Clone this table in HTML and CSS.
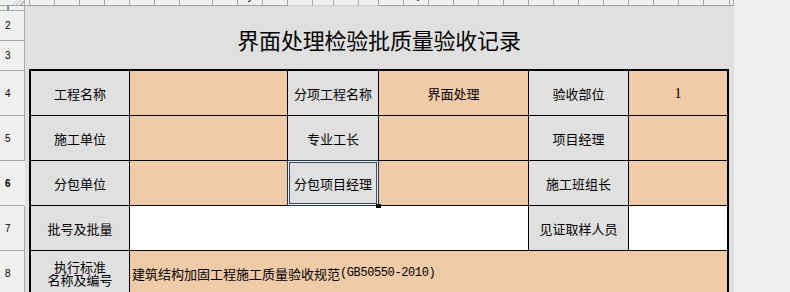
FILE: index.html
```html
<!DOCTYPE html>
<html lang="zh-CN">
<head>
<meta charset="utf-8">
<title>界面处理检验批质量验收记录</title>
<link rel="stylesheet" href="styles.css">
</head>
<body>
  <div class="colhead">
    <div class="ch corner"><i class="hatch"></i></div>
    <div class="ch"><span>A</span></div>
    <div class="ch"><span>B</span></div>
    <div class="ch"><span>C</span></div>
    <div class="ch"><span>D</span></div>
    <div class="ch"><span>E</span></div>
    <div class="ch"><span>F</span></div>
    <div class="ch"><span>G</span></div>
    <div class="ch"><span>H</span></div>
    <div class="ch"><span>I</span></div>
    <div class="ch"><span>J</span></div>
    <div class="ch"><span>K</span></div>
    <div class="ch on"><span>L</span></div>
    <div class="ch on"><span>M</span></div>
    <div class="ch on"><span>N</span></div>
    <div class="ch on"><span>O</span></div>
    <div class="ch"><span>P</span></div>
    <div class="ch"><span>Q</span></div>
    <div class="ch"><span>R</span></div>
    <div class="ch"><span>S</span></div>
    <div class="ch"><span>T</span></div>
    <div class="ch"><span>U</span></div>
    <div class="ch"><span>V</span></div>
    <div class="ch"><span>W</span></div>
    <div class="ch"><span>X</span></div>
    <div class="ch"><span>Y</span></div>
    <div class="ch"><span>Z</span></div>
    <div class="ch"><span>AA</span></div>
    <div class="ch"><span>AB</span></div>
    <div class="ch"><span>AC</span></div>
    <div class="ch"><span>AD</span></div>
  </div>

  <div class="body-row">
    <div class="rowhead">
      <div class="rh r-tiny">1</div>
      <div class="rh r-title">2</div>
      <div class="rh r-title">3</div>
      <div class="rh r-form">4</div>
      <div class="rh r-form">5</div>
      <div class="rh r-form on">6</div>
      <div class="rh r-form">7</div>
      <div class="rh r-form">8</div>
    </div>

    <main class="sheet">
      <h1 class="title">界面处理检验批质量验收记录</h1>
      <div class="form">
        <div class="c lbl">工程名称</div>
        <div class="c val"></div>
        <div class="c lbl">分项工程名称</div>
        <div class="c val">界面处理</div>
        <div class="c lbl">验收部位</div>
        <div class="c val num">1</div>

        <div class="c lbl">施工单位</div>
        <div class="c val"></div>
        <div class="c lbl">专业工长</div>
        <div class="c val"></div>
        <div class="c lbl">项目经理</div>
        <div class="c val"></div>

        <div class="c lbl">分包单位</div>
        <div class="c val"></div>
        <div class="c lbl active">分包项目经理<i class="handle"></i></div>
        <div class="c val"></div>
        <div class="c lbl">施工班组长</div>
        <div class="c val"></div>

        <div class="c lbl">批号及批量</div>
        <div class="c blank span3"></div>
        <div class="c lbl">见证取样人员</div>
        <div class="c blank"></div>

        <div class="c lbl two"><span>执行标准</span><span>名称及编号</span></div>
        <div class="c val span5 left">建筑结构加固工程施工质量验收规范<span class="code">(GB50550-2010)</span></div>
      </div>
    </main>
  </div>
</body>
</html>
```

FILE: styles.css
```css
html, body {
  margin: 0;
  padding: 0;
}

body {
  width: 790px;
  height: 292px;
  overflow: hidden;
  background: #efefef;
  font-family: "Noto Sans CJK SC", sans-serif;
  color: #000;
}

/* ---- column header strip ---- */
.colhead {
  display: grid;
  grid-template-columns: 25px 5px repeat(6, 25px) 33px repeat(4, 25px) 21px 25px 20px repeat(13, 25px) 26px 4px;
  width: 734px;
  height: 6px;
}

.ch {
  position: relative;
  box-sizing: border-box;
  height: 6px;
  overflow: hidden;
  background: #f0f0f0;
  border-right: 1px solid #a8a8a8;
  border-bottom: 1px solid #a0a0a0;
  font: 11px "DejaVu Sans", sans-serif;
  text-align: center;
  color: #000;
}

.ch span {
  display: block;
  line-height: 11px;
  margin-top: -9px;
}

.ch.on {
  border-bottom-color: #cfcfcf;
}

.corner .hatch {
  position: absolute;
  right: 0;
  top: 0;
  width: 12px;
  height: 5px;
  background: repeating-linear-gradient(135deg, #b8b8b8 0 1px, #f0f0f0 1px 3px);
  clip-path: polygon(100% 0, 100% 100%, 0 100%, 40% 0);
}

/* ---- rows ---- */
.body-row {
  display: flex;
}

.rowhead {
  flex: none;
  width: 25px;
}

.rh {
  box-sizing: border-box;
  display: flex;
  align-items: center;
  padding-left: 5px;
  overflow: hidden;
  background: #f0f0f0;
  border-right: 1px solid #a8a8a8;
  border-bottom: 1px solid #a8a8a8;
  font: 10px "Liberation Sans", sans-serif;
  color: #000;
}

.rh.on {
  font-weight: bold;
  border-right-color: #f0f0f0;
}

.r-tiny { height: 5px; }
.r-title { height: 30px; }
.r-form { height: 45px; }

/* ---- sheet ---- */
.sheet {
  flex: none;
  box-sizing: border-box;
  width: 709px;
  height: 286px;
  padding-left: 4px;
  background: #e0e0e0;
}

.title {
  box-sizing: border-box;
  display: flex;
  align-items: center;
  justify-content: center;
  width: 700px;
  height: 63px;
  margin: 0;
  padding-top: 3px;
  font-size: 22px;
  font-weight: 400;
  letter-spacing: -0.2px;
}

.form {
  display: grid;
  grid-template-columns: 98px 157px 90px 149px 99px 98px;
  grid-auto-rows: 44px;
  gap: 1px;
  width: 696px;
  background: #000;
  border: 2px solid #000;
  border-bottom: 0;
}

.c {
  display: flex;
  align-items: center;
  justify-content: center;
  font-size: 13px;
  line-height: 13px;
  white-space: nowrap;
}

.lbl { background: #e0e0e0; }
.val { background: #f0cba8; }
.blank { background: #fff; }

.span3 { grid-column: span 3; }
.span5 { grid-column: span 5; }

.left {
  justify-content: flex-start;
  padding-left: 2px;
}

.two {
  flex-direction: column;
}

.two span {
  display: block;
  line-height: 13px;
}

.num {
  font-family: "Liberation Serif", serif;
  font-size: 14px;
}

.code {
  font-family: "Liberation Mono", monospace;
  font-size: 12px;
  letter-spacing: -0.4px;
}

/* active cell frame with fill handle */
.active {
  position: relative;
}

.active::after {
  content: "";
  position: absolute;
  inset: -1px;
  border: 1px solid #22364f;
  box-shadow: inset 0 0 0 1px #eef2f6, inset 0 0 0 2px #3a4a5c;
  pointer-events: none;
}

.handle {
  position: absolute;
  right: -3px;
  bottom: -3px;
  width: 5px;
  height: 4px;
  background: #000;
  z-index: 1;
}
```
